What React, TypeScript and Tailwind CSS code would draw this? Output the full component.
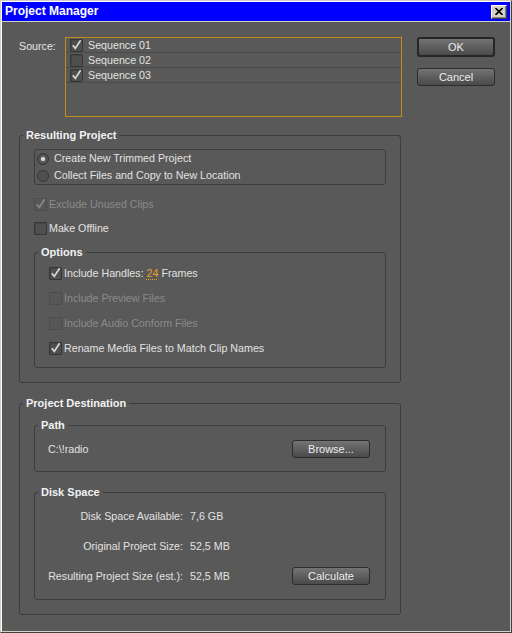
import React from 'react';

type BoxProps = { checked?: boolean; disabled?: boolean };

const CheckBox: React.FC<BoxProps> = ({ checked, disabled }) => (
  <span
    className={`flex h-[13px] w-[13px] shrink-0 items-center justify-center rounded-[1px] border ${
      disabled ? 'border-[#4c4c4c] bg-[#575757]' : 'border-[#363636] bg-[#4f4f4f] shadow-[inset_1px_1px_0_#464646]'
    }`}
  >
    {checked && (
      <svg width="11" height="11" viewBox="0 0 11 11" className="overflow-visible">
        <path
          d="M1.8 5.2 L4.3 8.4 L9.6 0.2"
          fill="none"
          stroke={disabled ? '#8a8a8a' : '#dadada'}
          strokeWidth="1.7"
        />
      </svg>
    )}
  </span>
);

const Radio: React.FC<{ selected?: boolean }> = ({ selected }) => (
  <span className="flex h-[12px] w-[12px] shrink-0 items-center justify-center rounded-full border border-[#363636] bg-[#505050]">
    {selected && <span className="h-[4px] w-[4px] rounded-full bg-[#dcdcdc] shadow-[0_0_2px_#bbbbbb]" />}
  </span>
);

type BtnProps = { label: string; primary?: boolean };

const Btn: React.FC<BtnProps> = ({ label, primary }) => (
  <button
    className={`flex w-[78px] shrink-0 items-center justify-center rounded-[3px] bg-linear-to-b from-[#747474] to-[#4a4a4a] text-[11px] leading-none text-[#ececec] ${
      primary ? 'h-[20px] border-2 border-[#252525]' : 'h-[18px] border border-[#2c2c2c]'
    }`}
  >
    {label}
  </button>
);

type GroupProps = { title: string; className?: string; children: React.ReactNode };

const Group: React.FC<GroupProps> = ({ title, className, children }) => (
  <fieldset className={`rounded-[3px] border border-[#3c3c3c] ${className ?? ''}`}>
    <legend className="ml-[3px] px-[3px] text-[11px] font-bold leading-[13px] text-[#f2f2f2]">{title}</legend>
    {children}
  </fieldset>
);

const CheckRow: React.FC<BoxProps & { children: React.ReactNode; className?: string }> = ({
  checked,
  disabled,
  children,
  className,
}) => (
  <div className={`flex items-center gap-[2px] ${className ?? ''}`}>
    <CheckBox checked={checked} disabled={disabled} />
    <span className={disabled ? 'text-[#8a8a8a]' : ''}>{children}</span>
  </div>
);

const sequences = [
  { name: 'Sequence 01', checked: true },
  { name: 'Sequence 02', checked: false },
  { name: 'Sequence 03', checked: true },
];

const sizes = [
  { label: 'Disk Space Available:', value: '7,6 GB' },
  { label: 'Original Project Size:', value: '52,5 MB' },
  { label: 'Resulting Project Size (est.):', value: '52,5 MB', button: 'Calculate' },
];

export default function App() {
  return (
    <div className="h-[633px] w-[512px] border border-[#d4d0c8] border-r-[#404040] border-b-[#404040] font-['Liberation_Sans',Arial,sans-serif] text-[10.7px] leading-[13px] text-[#e2e2e2]">
      <div className="flex h-full flex-col border border-[#d4d0c8] border-t-white border-l-white bg-[#595959]">
        {/* title bar */}
        <div className="flex h-[20px] shrink-0 items-center justify-between border-b border-[#d4d0c8] bg-[#0000ff] pr-[3px] pl-[3px]">
          <span className="text-[12px] font-bold text-white">Project Manager</span>
          <button className="flex h-[14px] w-[16px] items-center justify-center border border-white border-r-[#404040] border-b-[#404040] bg-[#d4d0c8] shadow-[inset_-1px_-1px_0_#808080]">
            <svg width="8" height="7" viewBox="0 0 8 7">
              <path d="M0.5 0 L7.5 7 M7.5 0 L0.5 7" stroke="#000" strokeWidth="1.6" />
            </svg>
          </button>
        </div>

        <div className="flex flex-1 pl-[17px]">
          {/* left column */}
          <div className="flex w-[383px] flex-col">
            <div className="mt-[15px] flex">
              <span className="w-[46px] pt-[3px]">Source:</span>
              <div className="h-[80px] w-[337px] border border-[#c18f14]">
                {sequences.map((s) => (
                  <div key={s.name} className="flex h-[15px] items-center gap-[5px] border-b border-[#4b4b4b] pl-[4px]">
                    <CheckBox checked={s.checked} />
                    <span>{s.name}</span>
                  </div>
                ))}
              </div>
            </div>

            <Group title="Resulting Project" className="mt-[12px] w-[382px]">
              <div className="flex flex-col px-[14px] pt-[7px] pb-[14px]">
                <div className="flex flex-col rounded-[3px] border border-[#3c3c3c]">
                  <div className="flex h-[17px] items-center gap-[5px] pl-[2px]">
                    <Radio selected />
                    <span>Create New Trimmed Project</span>
                  </div>
                  <div className="flex h-[17px] items-center gap-[5px] pl-[2px]">
                    <Radio />
                    <span>Collect Files and Copy to New Location</span>
                  </div>
                </div>
                <CheckRow checked disabled className="mt-[11px] h-[17px]">
                  Exclude Unused Clips
                </CheckRow>
                <CheckRow className="mt-[7px] h-[17px]">Make Offline</CheckRow>

                <Group title="Options" className="mt-[9px]">
                  <div className="flex flex-col pt-[2px] pb-[6px] pl-[14px]">
                    <CheckRow checked className="h-[25px]">
                      Include Handles:{' '}
                      <span className="text-[#e8a21a] underline decoration-dotted underline-offset-2">24</span> Frames
                    </CheckRow>
                    <CheckRow disabled className="h-[25px]">
                      Include Preview Files
                    </CheckRow>
                    <CheckRow disabled className="h-[25px]">
                      Include Audio Conform Files
                    </CheckRow>
                    <CheckRow checked className="h-[25px]">
                      Rename Media Files to Match Clip Names
                    </CheckRow>
                  </div>
                </Group>
              </div>
            </Group>

            <Group title="Project Destination" className="mt-[14px] w-[382px]">
              <div className="flex flex-col px-[14px] pt-[9px] pb-[14px]">
                <Group title="Path">
                  <div className="mt-[8px] mb-[13px] flex h-[18px] items-center justify-between pr-[15px] pl-[13px]">
                    <span>C:\!radio</span>
                    <Btn label="Browse..." />
                  </div>
                </Group>
                <Group title="Disk Space" className="mt-[14px]">
                  <div className="flex flex-col pt-[2px] pr-[15px] pb-[8px]">
                    {sizes.map((r) => (
                      <div key={r.label} className="flex h-[30px] items-center">
                        <span className="w-[148px] whitespace-nowrap text-right">{r.label}</span>
                        <span className="ml-[7px]">{r.value}</span>
                        {r.button && (
                          <span className="ml-auto">
                            <Btn label={r.button} />
                          </span>
                        )}
                      </div>
                    ))}
                  </div>
                </Group>
              </div>
            </Group>
          </div>

          {/* right column */}
          <div className="ml-[15px] flex flex-col">
            <div className="mt-[15px]">
              <Btn label="OK" primary />
            </div>
            <div className="mt-[11px]">
              <Btn label="Cancel" />
            </div>
          </div>
        </div>
      </div>
    </div>
  );
}
